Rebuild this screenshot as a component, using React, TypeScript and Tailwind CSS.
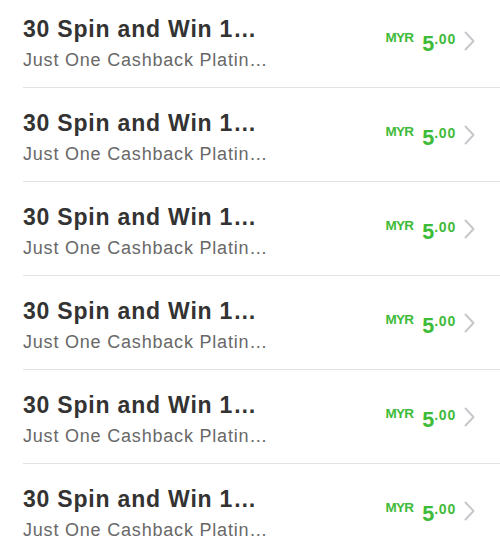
const rows = Array.from({ length: 6 }, (_, i) => ({
  id: i,
  title: "30 Spin and Win 1…",
  subtitle: "Just One Cashback Platin…",
}));

function Chevron() {
  return (
    <svg width="11" height="20" viewBox="0 0 11 20" fill="none">
      <path d="M1.5 1.5 L9.5 10 L1.5 18.5" stroke="#c8c8cc" strokeWidth="2" strokeLinecap="round" strokeLinejoin="round" />
    </svg>
  );
}

export default function App() {
  return (
    <div className="h-[551px] w-[500px] overflow-hidden bg-white font-['Liberation_Sans',Arial,sans-serif]">
      <div className="mt-[-6px] pl-[23px]">
        {rows.map((row) => (
          <div key={row.id} className="flex h-[94px] border-b border-[#e2e2e2] pr-[25px]">
            <div className="flex-1 pt-[22px]">
              <p className="text-[23px] font-bold leading-[26px] tracking-[0.8px] text-[#333333]">{row.title}</p>
              <p className="mt-[7px] text-[18px] leading-[22px] tracking-[0.8px] text-[#686868]">{row.subtitle}</p>
            </div>
            <div className="flex items-start pt-[37px] font-bold text-[#3fbb3a]">
              <span className="text-[13.5px] leading-none tracking-[-0.8px]">MYR</span>
              <span className="ml-[9px] mt-[3px] text-[21.5px] leading-none">5</span>
              <span className="mt-[1px] text-[14px] leading-none tracking-[0.8px]">.00</span>
            </div>
            <div className="ml-[8px] flex items-center pt-[1px]">
              <Chevron />
            </div>
          </div>
        ))}
      </div>
    </div>
  );
}
